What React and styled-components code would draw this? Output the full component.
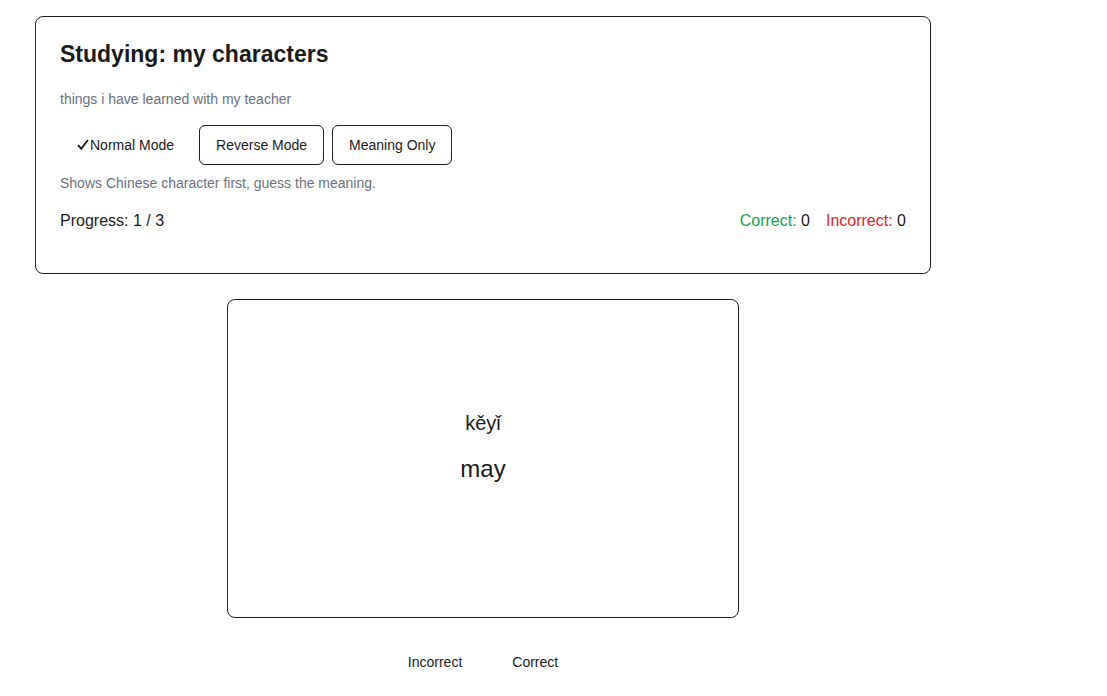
import React, { useState } from 'react';
import styled, { createGlobalStyle } from 'styled-components';

const GlobalStyle = createGlobalStyle`
    html, body {
        margin: 0;
        padding: 0;
        background: #ffffff;
        font-family: "Liberation Sans", Arial, sans-serif;
        color: #1a1a1a;
    }
`;

const Page = styled.div`
    width: 896px;
    margin-left: 35px;
    padding-top: 16px;
    display: flex;
    flex-direction: column;
    align-items: center;
`;

const InfoCard = styled.section`
    box-sizing: border-box;
    width: 100%;
    border: 1px solid #1f1f1f;
    border-radius: 8px;
    padding: 24px;
`;

const Title = styled.h2`
    margin: 0;
    font-size: 23px;
    font-weight: 700;
    line-height: 26px;
    color: #1a1a1a;
`;

const Subtitle = styled.p`
    margin: 22px 0 16px;
    font-size: 14px;
    line-height: 20px;
    color: #6b7280;
`;

const ModeRow = styled.div`
    display: flex;
    gap: 8px;
`;

const Button = styled.button`
    box-sizing: border-box;
    height: 40px;
    padding: 0 16px;
    border: 1px solid ${p => (p.$plain ? 'transparent' : '#1f1f1f')};
    border-radius: 6px;
    background: #ffffff;
    font-family: inherit;
    font-size: 14px;
    color: #1a1a1a;
    cursor: pointer;
    display: inline-flex;
    align-items: center;
`;

const CheckIcon = styled.svg`
    width: 12px;
    height: 12px;
    margin-right: 1px;
    flex-shrink: 0;
`;

const Hint = styled.p`
    margin: 8px 0 16px;
    font-size: 14px;
    line-height: 20px;
    color: #6b7280;
`;

const StatsRow = styled.div`
    display: flex;
    justify-content: space-between;
    align-items: center;
    font-size: 16px;
    line-height: 24px;
    margin-bottom: 16px;
`;

const Scores = styled.div`
    display: flex;
    gap: 16px;
`;

const Label = styled.span`
    color: ${p => p.$color};
`;

const Flashcard = styled.div`
    box-sizing: border-box;
    width: 512px;
    height: 319px;
    margin-top: 25px;
    border: 1px solid #1f1f1f;
    border-radius: 8px;
    display: flex;
    flex-direction: column;
    align-items: center;
    justify-content: center;
    padding-bottom: 22px;
    cursor: pointer;
`;

const Pinyin = styled.div`
    font-size: 20px;
    line-height: 23px;
    margin-bottom: 20px;
`;

const Meaning = styled.div`
    font-size: 24px;
    line-height: 28px;
`;

const AnswerRow = styled.div`
    display: flex;
    gap: 16px;
    margin-top: 24px;
`;

const modes = [
    { key: 'normal', label: 'Normal Mode', hint: 'Shows Chinese character first, guess the meaning.' },
    { key: 'reverse', label: 'Reverse Mode', hint: 'Shows the meaning first, guess the Chinese character.' },
    { key: 'meaning', label: 'Meaning Only', hint: 'Shows Chinese character first, guess only the meaning.' }
];

const Check = () => (
    <CheckIcon viewBox="0 0 12 12" aria-hidden="true">
        <path d="M0.3 6.8 L1.7 5.6 L4.2 8.3 L10.2 0.6 L11.6 1.6 L4.3 11.3 Z" fill="#1a1a1a" />
    </CheckIcon>
);

const App = () => {
    const [mode, setMode] = useState('normal');
    const [correct, setCorrect] = useState(0);
    const [incorrect, setIncorrect] = useState(0);

    const current = modes.find(m => m.key === mode);

    return (
        <>
            <GlobalStyle />
            <Page>
                <InfoCard>
                    <Title>Studying: my characters</Title>
                    <Subtitle>things i have learned with my teacher</Subtitle>
                    <ModeRow>
                        {modes.map(m => (
                            <Button key={m.key} $plain={m.key === mode} onClick={() => setMode(m.key)}>
                                {m.key === mode && <Check />}{m.label}
                            </Button>
                        ))}
                    </ModeRow>
                    <Hint>{current.hint}</Hint>
                    <StatsRow>
                        <span>Progress: 1 / 3</span>
                        <Scores>
                            <span><Label $color="#16a34a">Correct:</Label> {correct}</span>
                            <span><Label $color="#dc2626">Incorrect:</Label> {incorrect}</span>
                        </Scores>
                    </StatsRow>
                </InfoCard>
                <Flashcard>
                    <Pinyin>kěyǐ</Pinyin>
                    <Meaning>may</Meaning>
                </Flashcard>
                <AnswerRow>
                    <Button $plain onClick={() => setIncorrect(incorrect + 1)}>Incorrect</Button>
                    <Button $plain onClick={() => setCorrect(correct + 1)}>Correct</Button>
                </AnswerRow>
            </Page>
        </>
    );
};

export default App;
